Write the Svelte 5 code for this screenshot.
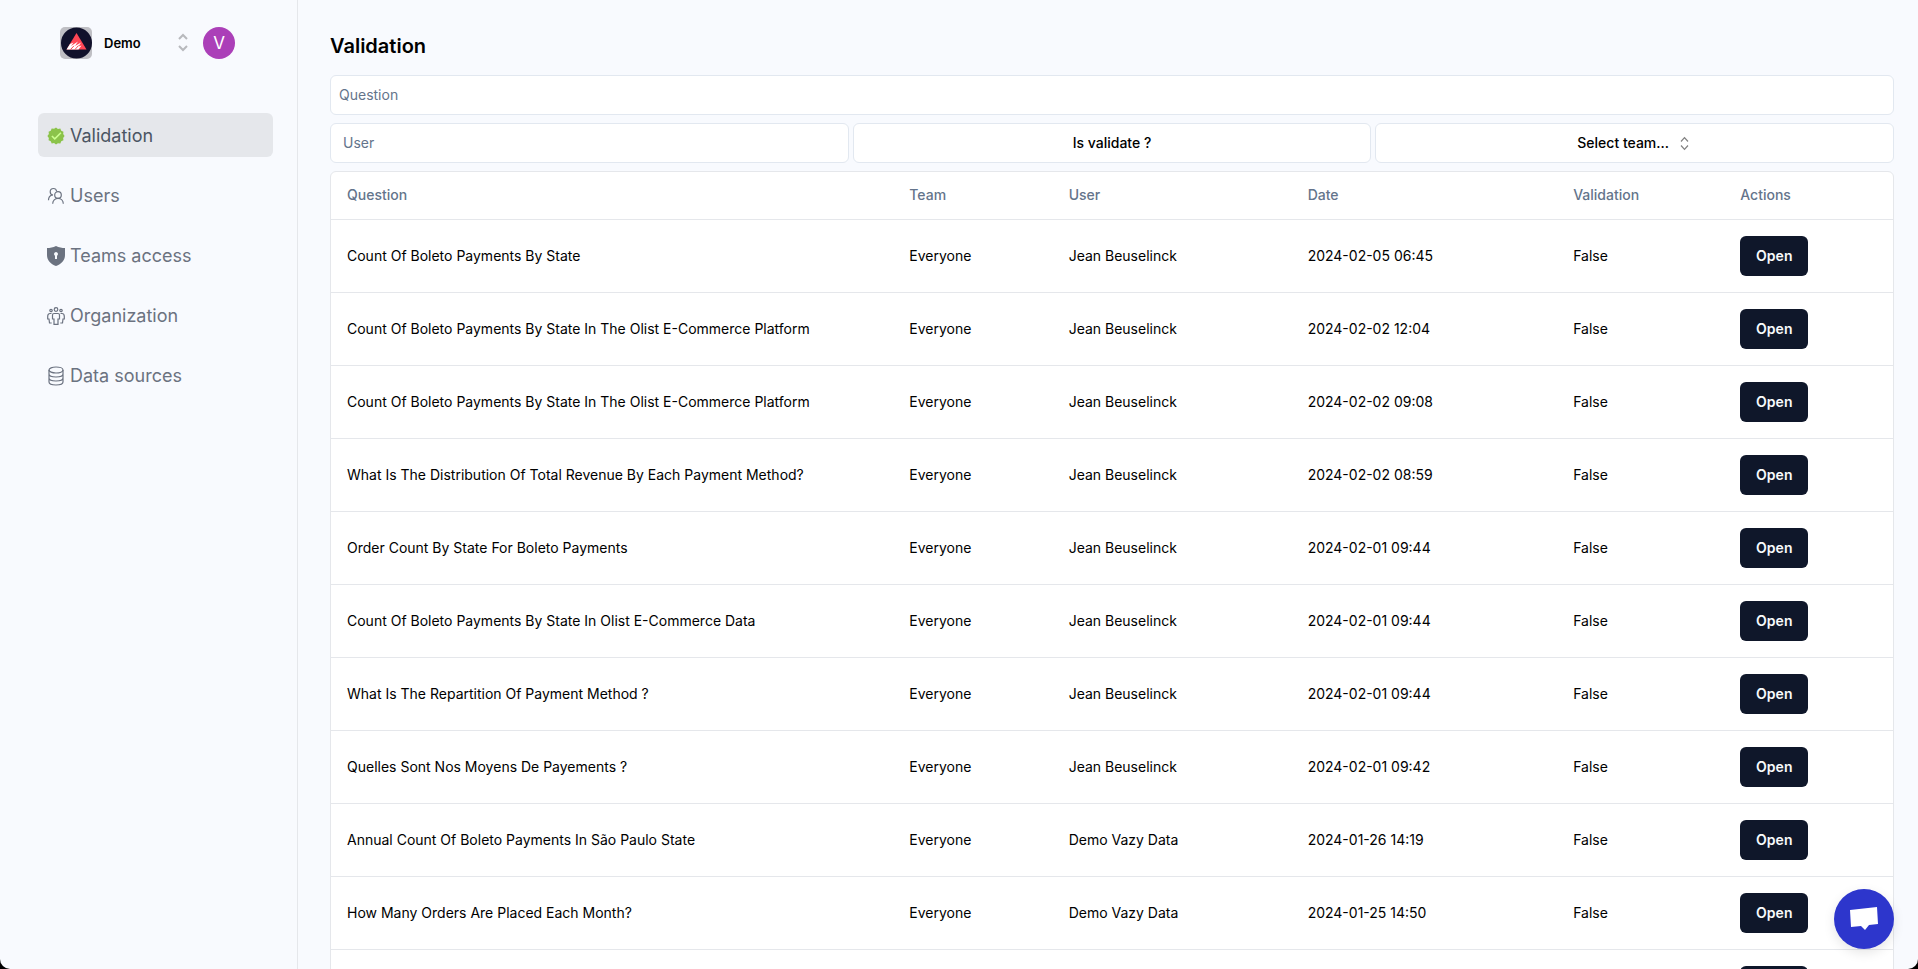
<script>
  const nav = [
    { id: 'validation', label: 'Validation' },
    { id: 'users', label: 'Users' },
    { id: 'teams', label: 'Teams access' },
    { id: 'organization', label: 'Organization' },
    { id: 'data', label: 'Data sources' }
  ];
  const jean = 'Jean Beuselinck';
  const vazy = 'Demo Vazy Data';
  const rows = [
    ['Count Of Boleto Payments By State', jean, '2024-02-05 06:45'],
    ['Count Of Boleto Payments By State In The Olist E-Commerce Platform', jean, '2024-02-02 12:04'],
    ['Count Of Boleto Payments By State In The Olist E-Commerce Platform', jean, '2024-02-02 09:08'],
    ['What Is The Distribution Of Total Revenue By Each Payment Method?', jean, '2024-02-02 08:59'],
    ['Order Count By State For Boleto Payments', jean, '2024-02-01 09:44'],
    ['Count Of Boleto Payments By State In Olist E-Commerce Data', jean, '2024-02-01 09:44'],
    ['What Is The Repartition Of Payment Method ?', jean, '2024-02-01 09:44'],
    ['Quelles Sont Nos Moyens De Payements ?', jean, '2024-02-01 09:42'],
    ['Annual Count Of Boleto Payments In São Paulo State', vazy, '2024-01-26 14:19'],
    ['How Many Orders Are Placed Each Month?', vazy, '2024-01-25 14:50'],
    ['', '', '']
  ];
</script>

<div class="window">
  <aside>
    <div class="account">
      <button class="org">
        <svg class="logo" viewBox="0 0 32 32" aria-hidden="true">
          <rect width="32" height="32" rx="5" fill="#bfbfc4" />
          <circle cx="16.500" cy="16" r="15.500" fill="#11112b" />
          <path d="M16.500 6 26.500 22.500H6.500z" fill="#ff4655" />
          <path d="M6.500 22.500 10 17 13.500 15.500 11 19 18 14.500 15 19 21 15.500 18.500 19.500 21.500 18.500 18.500 22.500z" fill="#fff" />
          <path d="M10.500 22.500 14 18.800M15 22.500 18.500 18.500" stroke="#ff4655" stroke-width="1" />
        </svg>
        <span>Demo</span>
        <svg class="updown" viewBox="0 0 16 24" aria-hidden="true">
          <path d="m4 8 4-4 4 4M4 15l4 4 4-4" />
        </svg>
      </button>
      <button class="avatar">V</button>
    </div>
    <nav>
      {#each nav as item, i}
        <a href="#{item.id}" class:active={i === 0}>
          {#if item.id === 'validation'}
            <svg viewBox="2 2 44 44" aria-hidden="true">
              <path fill="#8bc34a" d="m24 3 4.700 3.600 5.800-.8 2.300 5.400 5.400 2.200-.7 5.900L45 24l-3.600 4.700.8 5.800-5.400 2.300-2.200 5.400-5.900-.7L24 45l-4.700-3.600-5.800.8-2.300-5.400-5.400-2.200.7-5.900L3 24l3.600-4.700-.8-5.800 5.400-2.300 2.200-5.400 5.900.7z" />
              <path fill="#ccff90" d="M34.600 14.600 21 28.200l-5.600-5.600-2.800 2.800 8.400 8.400 16.400-16.400z" />
            </svg>
          {:else if item.id === 'users'}
            <svg viewBox="0 0 18 18" class="line" aria-hidden="true">
              <circle cx="11" cy="8" r="3.300" />
              <path d="M5.700 16.700c0-3.200 2.300-5.400 5.300-5.400s5.300 2.200 5.300 5.400M9.700 4.400C9.300 2.500 8 1.500 6.500 1.500 4.500 1.500 3.200 3 3.200 4.700s.9 3 2.800 3.500M1.500 13.200c0-2.500 1.200-4.500 3.500-5.200" />
            </svg>
          {:else if item.id === 'teams'}
            <svg viewBox="0 0 18 20" class="shield" aria-hidden="true">
              <path d="M9 0c3 1.600 6 2 9 2v7c0 5.200-3.600 9-9 11-5.400-2-9-5.800-9-11V2c3 0 6-.4 9-2z" fill="#6b7280" />
              <path d="M9 6a2 2 0 0 1 1 3.700V13H8V9.700A2 2 0 0 1 9 6z" fill="#f8fafe" />
            </svg>
          {:else if item.id === 'organization'}
            <svg viewBox="0 0 18 18" class="line" aria-hidden="true">
              <circle cx="9" cy="2.500" r="1.800" />
              <circle cx="4" cy="3.500" r="1.200" />
              <circle cx="14" cy="3.500" r="1.200" />
              <path d="M7 6.500h4c1 0 1.500.5 1.500 1.500v4H11v5.300H7V12H5.500V8c0-1 .5-1.500 1.500-1.500zM4.500 6.500H3C1.500 6.500.7 8 .7 9.500V12H2l.5 4h2.200M13.500 6.500H15c1.500 0 2.300 1.500 2.300 3V12H16l-.5 4h-2.200" />
            </svg>
          {:else}
            <svg viewBox="0 0 18 20" class="line shield" aria-hidden="true">
              <ellipse cx="9" cy="4" rx="7" ry="3" />
              <path d="M2 4v12c0 1.700 3 3 7 3s7-1.300 7-3V4M2 8c0 1.700 3 3 7 3s7-1.300 7-3M2 12c0 1.700 3 3 7 3s7-1.300 7-3" />
            </svg>
          {/if}
          <span>{item.label}</span>
        </a>
      {/each}
    </nav>
  </aside>

  <main>
    <h1>Validation</h1>
    <input class="field question" aria-label="Question" placeholder="Question" />
    <div class="filters">
      <input class="field" aria-label="User" placeholder="User" />
      <button class="field">Is validate ?</button>
      <button class="field">
        Select team...
        <svg viewBox="0 0 15 15" aria-hidden="true"><path d="m4 5.500 3.500-3.800L11 5.500M4 9.500l3.500 3.800L11 9.500" /></svg>
      </button>
    </div>
    <div class="card">
      <table>
        <thead>
          <tr>
            <th class="c1">Question</th>
            <th class="c2">Team</th>
            <th class="c3">User</th>
            <th class="c4">Date</th>
            <th class="c5">Validation</th>
            <th class="c6">Actions</th>
          </tr>
        </thead>
        <tbody>
          {#each rows as [question, user, date]}
            <tr>
              <td>{question}</td>
              <td>{question ? 'Everyone' : ''}</td>
              <td>{user}</td>
              <td>{date}</td>
              <td>{question ? 'False' : ''}</td>
              <td><button class="open" aria-label="Open">{question ? 'Open' : ''}</button></td>
            </tr>
          {/each}
        </tbody>
      </table>
    </div>
  </main>

  <button class="chat" aria-label="Chat">
    <svg viewBox="0 0 30 26" aria-hidden="true"><path d="M1 4 28 1l1 17-9 1-4 5-4-4-10 1z" fill="#fff" /></svg>
  </button>
</div>

<style>
  :global(body) {
    margin: 0;
    background: #000;
    font-family: Inter, sans-serif;
  }
  .window {
    display: flex;
    height: 100vh;
    overflow: hidden;
    background: #f8fafe;
    border-radius: 0 0 10px 10px;
    font-size: 14px;
    line-height: 20px;
    color: #000;
  }
  button,
  input {
    box-sizing: border-box;
    margin: 0;
    font: inherit;
    color: inherit;
  }
  button {
    padding: 0;
    border: 0;
    background: none;
    cursor: pointer;
  }
  aside {
    box-sizing: border-box;
    flex: 0 0 298px;
    padding: 27px 24px 0 38px;
    border-right: 1px solid #e5e7eb;
  }
  .account {
    display: flex;
    align-items: center;
    gap: 12px;
    padding-left: 22px;
  }
  .org {
    display: flex;
    align-items: center;
    width: 131px;
    font-size: 13px;
    font-weight: 600;
  }
  .org span {
    flex: 1;
    padding-left: 12px;
    text-align: left;
  }
  .logo {
    width: 32px;
    height: 32px;
  }
  .updown {
    width: 16px;
    height: 24px;
    fill: none;
    stroke: #b8b9bd;
    stroke-width: 2;
  }
  .avatar {
    width: 32px;
    height: 32px;
    border-radius: 50%;
    background: #ab3fb8;
    color: #fff;
    font-size: 17px;
  }
  nav {
    display: flex;
    flex-direction: column;
    gap: 16px;
    margin-top: 54px;
  }
  nav a {
    box-sizing: border-box;
    display: flex;
    align-items: center;
    gap: 5px;
    height: 44px;
    padding: 1px 0 0 9px;
    border-radius: 6px;
    color: #6b7280;
    font-size: 18px;
    line-height: 28px;
    text-decoration: none;
  }
  nav a.active {
    background: #e5e7eb;
    color: #4b5563;
  }
  nav svg {
    width: 18px;
    height: 18px;
  }
  nav svg.shield {
    height: 20px;
  }
  .line {
    fill: none;
    stroke: #6b7280;
    stroke-width: 1.2;
  }
  main {
    flex: 1;
    min-width: 0;
    padding: 32px 24px 0 32px;
  }
  h1 {
    margin: 0 0 15px;
    font-size: 20px;
    line-height: 28px;
    font-weight: 600;
  }
  .field {
    width: 100%;
    height: 40px;
    padding: 0 12px;
    border: 1px solid #e2e8f0;
    border-radius: 6px;
    background: #fff;
  }
  input.field {
    padding-bottom: 2px;
  }
  input.question {
    display: block;
    padding-left: 8px;
  }
  .field::placeholder {
    color: #64748b;
    opacity: 1;
  }
  .filters {
    display: grid;
    grid-template-columns: repeat(3, 1fr);
    gap: 4px;
    margin: 8px 0;
  }
  button.field {
    display: flex;
    align-items: center;
    justify-content: center;
    gap: 8px;
    font-weight: 500;
  }
  .field svg {
    width: 15px;
    height: 15px;
    fill: none;
    stroke: #808080;
    stroke-width: 1.2;
  }
  .card {
    border: 1px solid #e5e7eb;
    border-radius: 6px;
    background: #fff;
  }
  table {
    width: 100%;
    table-layout: fixed;
    border-collapse: collapse;
  }
  th,
  td {
    box-sizing: border-box;
    padding: 0 16px;
    text-align: left;
    border-bottom: 1px solid #e5e7eb;
  }
  th {
    height: 47px;
    color: #64748b;
    font-weight: 500;
  }
  td {
    height: 73px;
  }
  .c1 { width: 36%; }
  .c2 { width: 10.2%; }
  .c3 { width: 15.3%; }
  .c4 { width: 17%; }
  .c5 { width: 10.7%; }
  .c6 { width: 10.8%; }
  .open {
    display: block;
    width: 68px;
    height: 40px;
    border-radius: 6px;
    background: #0f172a;
    color: #f8fafc;
    font-weight: 600;
  }
  .chat {
    position: fixed;
    right: 24px;
    bottom: 20px;
    display: grid;
    place-items: center;
    width: 60px;
    height: 60px;
    border-radius: 50%;
    background: #2d36cc;
    box-shadow: 0 4px 12px rgba(0, 0, 0, 0.1);
  }
  .chat svg {
    width: 30px;
    height: 26px;
  }
</style>
